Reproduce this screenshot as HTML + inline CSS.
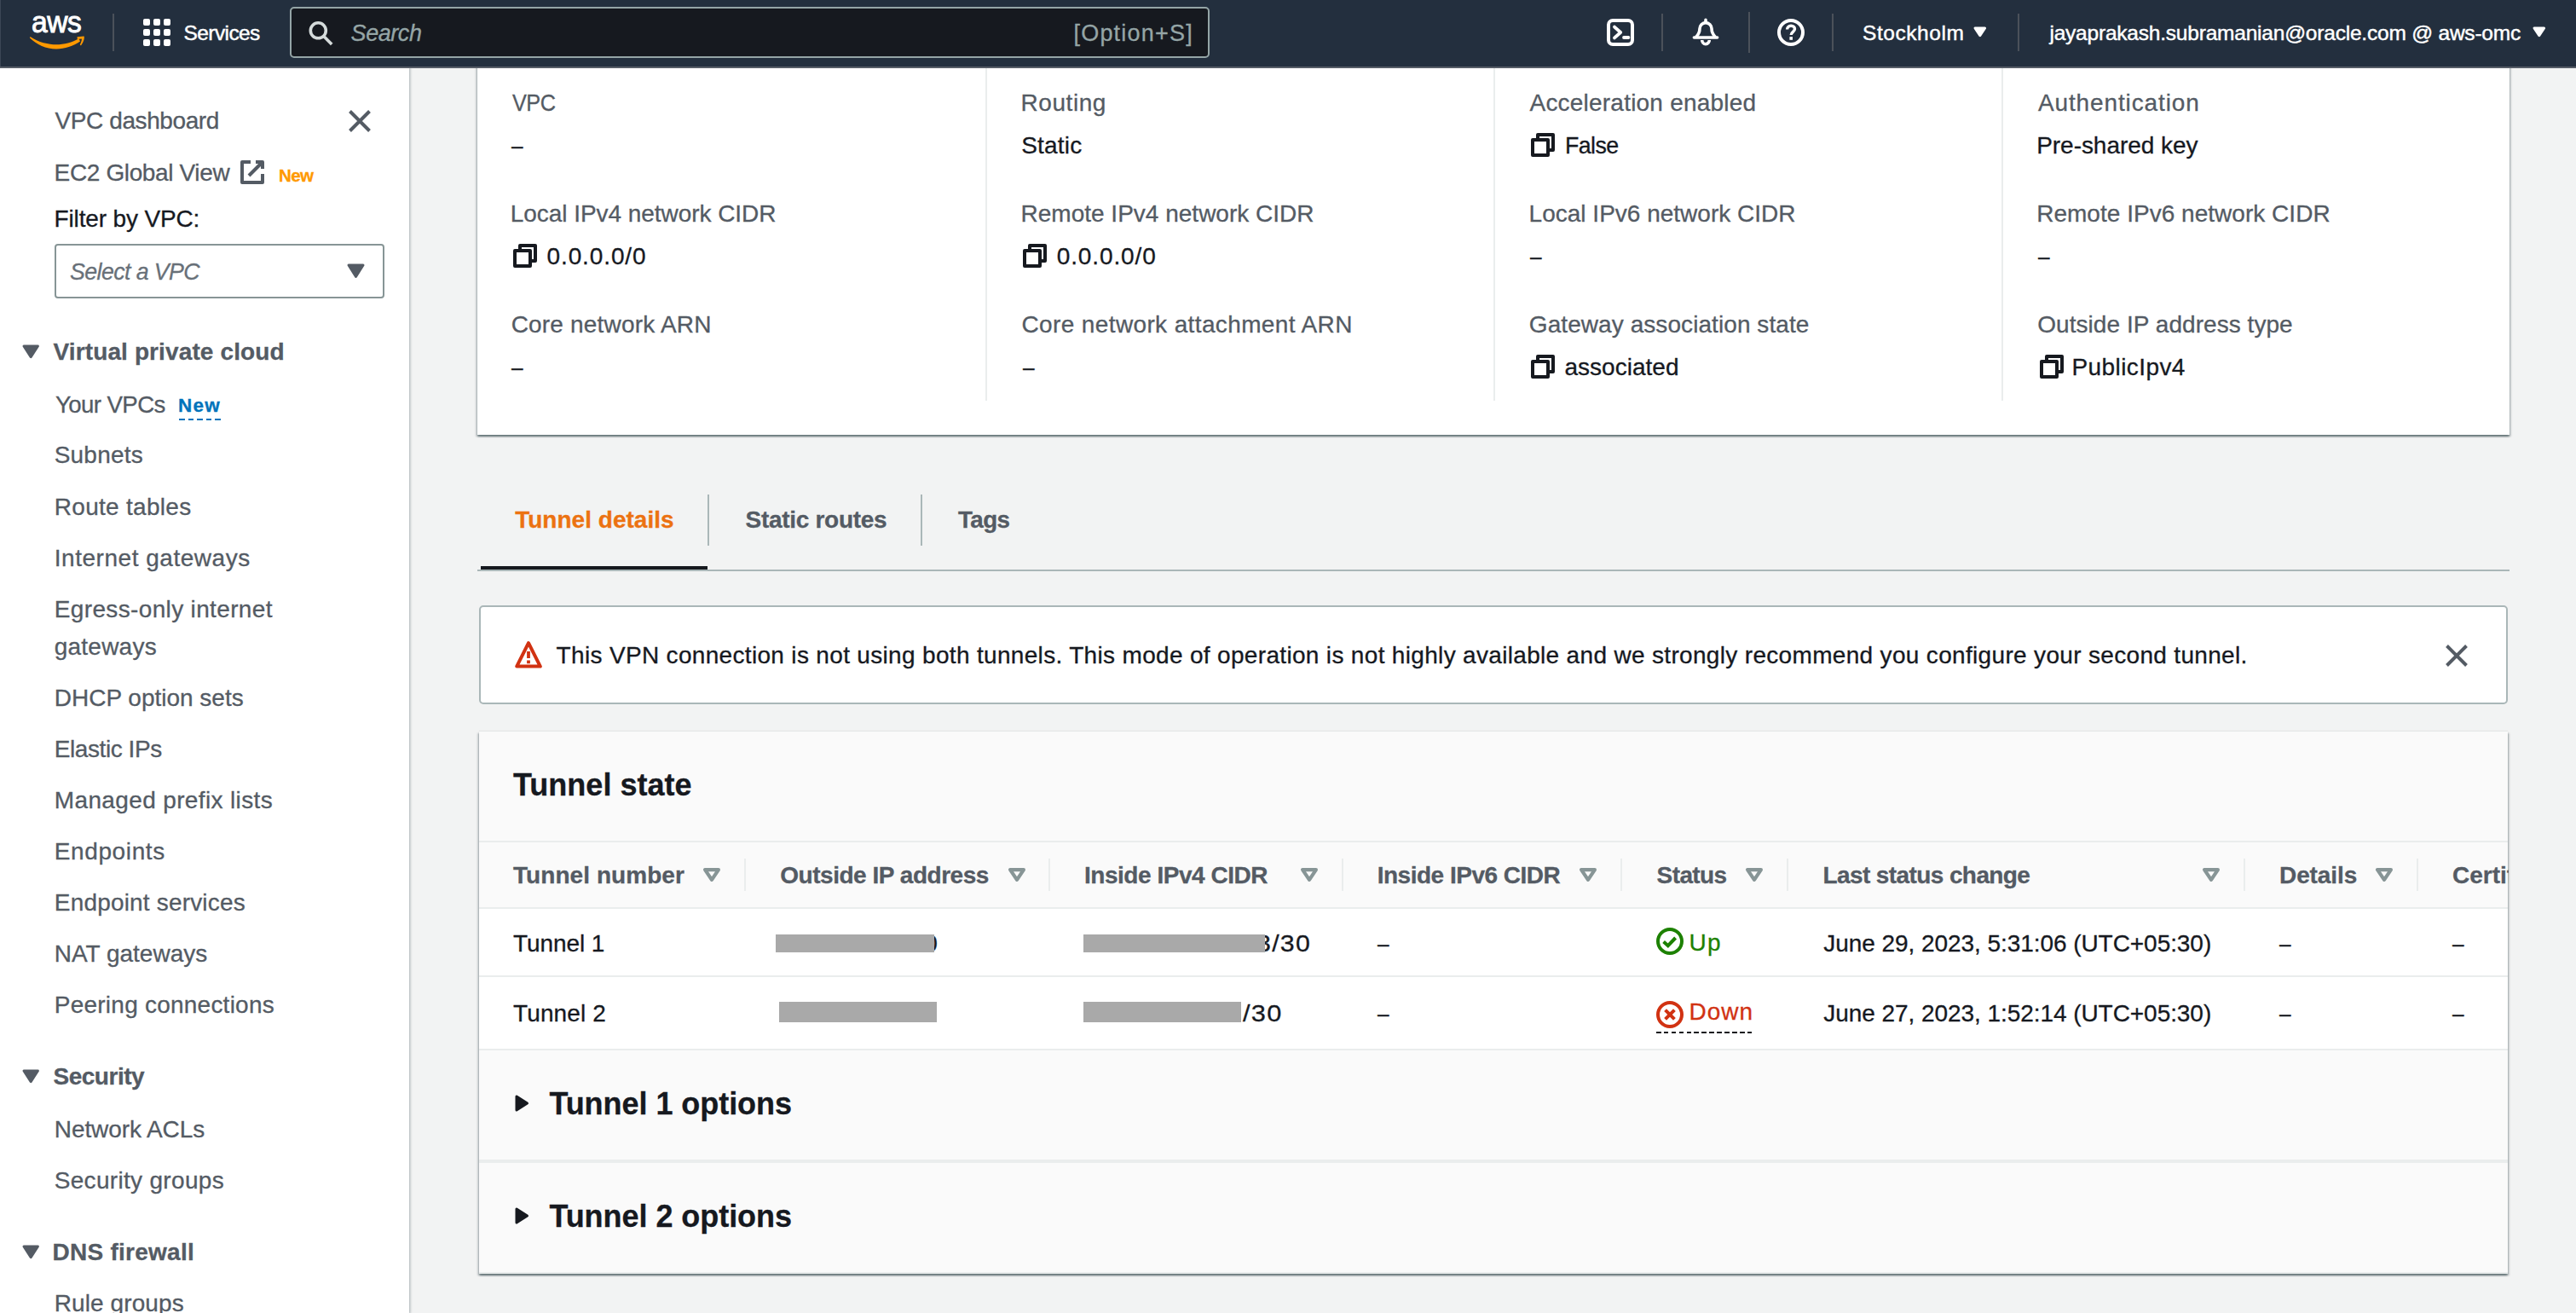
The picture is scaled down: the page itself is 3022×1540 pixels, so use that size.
<!DOCTYPE html>
<html lang="en"><head><meta charset="utf-8"><title>VPC Management Console</title>
<style>
*{box-sizing:border-box}
html,body{margin:0;padding:0}
html{width:3022px;height:1540px;overflow:hidden}
body{width:3022px;height:1540px;overflow:hidden;position:relative;background:#f2f3f3;font-family:"Liberation Sans",sans-serif;color:#16191f}
.a,.i,.t{position:absolute}
.i{display:block;overflow:visible}
.t{white-space:nowrap;line-height:1;transform-origin:0 0;-webkit-text-stroke:.3px currentColor}
.b{-webkit-text-stroke:.3px currentColor}
#pg{position:absolute;left:0;top:0;width:3022px;height:1540px;overflow:hidden}
.clip{width:65.5px;overflow:hidden;height:40px}
.hl{position:absolute;height:2px;background:#eaeded}
.vl{position:absolute;width:2px;background:#eaeded}
.nvl{position:absolute;width:2px;top:16px;height:44px;background:#4b515a}
.bar{position:absolute;background:#a9a9a9;z-index:3}
</style></head>
<body>
<div id="pg">
<div class="a" style="left:0;top:80px;width:480px;height:1460px;background:#fff;box-shadow:0 0 3px 1px rgba(0,28,36,.32)"></div>
<div class="a" style="left:560px;top:60px;width:2384px;height:450px;background:#fff;box-shadow:0 2px 2px 0 rgba(0,28,36,.45),2px 2px 2px 0 rgba(0,28,36,.15),-2px 2px 2px 0 rgba(0,28,36,.15)"></div>
<div class="vl" style="left:1156px;top:80px;height:390px"></div>
<div class="vl" style="left:1752px;top:80px;height:390px"></div>
<div class="vl" style="left:2348px;top:80px;height:390px"></div>
<svg class="i" style="left:1794.3px;top:154px" width="32" height="32" viewBox="0 0 32 32" ><g fill="none" stroke="#16191f" stroke-width="4" stroke-linejoin="round"><path d="M10 10V4h18v18h-6"/><path d="M4 10h18v18H4z"/></g></svg>
<svg class="i" style="left:599.8px;top:284px" width="32" height="32" viewBox="0 0 32 32" ><g fill="none" stroke="#16191f" stroke-width="4" stroke-linejoin="round"><path d="M10 10V4h18v18h-6"/><path d="M4 10h18v18H4z"/></g></svg>
<svg class="i" style="left:1198px;top:284px" width="32" height="32" viewBox="0 0 32 32" ><g fill="none" stroke="#16191f" stroke-width="4" stroke-linejoin="round"><path d="M10 10V4h18v18h-6"/><path d="M4 10h18v18H4z"/></g></svg>
<svg class="i" style="left:1794.3px;top:414px" width="32" height="32" viewBox="0 0 32 32" ><g fill="none" stroke="#16191f" stroke-width="4" stroke-linejoin="round"><path d="M10 10V4h18v18h-6"/><path d="M4 10h18v18H4z"/></g></svg>
<svg class="i" style="left:2390.5px;top:414px" width="32" height="32" viewBox="0 0 32 32" ><g fill="none" stroke="#16191f" stroke-width="4" stroke-linejoin="round"><path d="M10 10V4h18v18h-6"/><path d="M4 10h18v18H4z"/></g></svg>
<div class="a" style="left:560px;top:668px;width:2384px;height:2px;background:#aab7b8"></div>
<div class="a" style="left:564px;top:664px;width:266px;height:4.4px;background:#16191f"></div>
<div class="a" style="left:830px;top:580px;width:2px;height:60px;background:#aab7b8"></div>
<div class="a" style="left:1080px;top:580px;width:2px;height:60px;background:#aab7b8"></div>
<div class="a" style="left:562px;top:710px;width:2380px;height:116px;background:#fff;border:2px solid #aab7b8;border-radius:5px"></div>
<svg class="i" style="left:604px;top:751px" width="32" height="33" viewBox="0 0 32 33" ><path d="M16 3.2L29.8 30.6H2.2z" fill="none" stroke="#d13212" stroke-width="4" stroke-linejoin="round"/><path d="M16 13v8M16 23.4v3.8" stroke="#d13212" stroke-width="3.8" fill="none"/></svg>
<svg class="i" style="left:2868.5px;top:755.5px" width="26" height="26" viewBox="0 0 26 26" ><path d="M1.5 1.5L24.5 24.5M24.5 1.5L1.5 24.5" stroke="#545b64" stroke-width="4" fill="none"/></svg>
<div class="a" style="left:562px;top:858px;width:2380px;height:636px;background:#fafafa;box-shadow:0 2px 2px 0 rgba(0,28,36,.45),2px 2px 2px 0 rgba(0,28,36,.15),-2px 2px 2px 0 rgba(0,28,36,.15),0 -1px 1px 0 rgba(0,28,36,.06)"></div>
<div class="a" style="left:562px;top:1066px;width:2380px;height:164px;background:#fff"></div>
<div class="hl" style="left:562px;top:986px;width:2380px"></div>
<div class="hl" style="left:562px;top:1064px;width:2380px"></div>
<div class="hl" style="left:562px;top:1144px;width:2380px"></div>
<div class="hl" style="left:562px;top:1230px;width:2380px"></div>
<div class="hl" style="left:562px;top:1360px;width:2380px;height:4px"></div>
<div class="hl" style="left:562px;top:1492px;width:2380px;height:2px"></div>
<div class="vl" style="left:873px;top:1007px;height:38px"></div>
<div class="vl" style="left:1230px;top:1007px;height:38px"></div>
<div class="vl" style="left:1574px;top:1007px;height:38px"></div>
<div class="vl" style="left:1901px;top:1007px;height:38px"></div>
<div class="vl" style="left:2096px;top:1007px;height:38px"></div>
<div class="vl" style="left:2632px;top:1007px;height:38px"></div>
<div class="vl" style="left:2835px;top:1007px;height:38px"></div>
<svg class="i" style="left:825.3px;top:1018px" width="20" height="16" viewBox="0 0 20 16" ><path d="M2.1 2.1h15.8L10 13.9z" fill="none" stroke="#879596" stroke-width="4.2" stroke-linejoin="round"/></svg>
<svg class="i" style="left:1182.5px;top:1018px" width="20" height="16" viewBox="0 0 20 16" ><path d="M2.1 2.1h15.8L10 13.9z" fill="none" stroke="#879596" stroke-width="4.2" stroke-linejoin="round"/></svg>
<svg class="i" style="left:1526px;top:1018px" width="20" height="16" viewBox="0 0 20 16" ><path d="M2.1 2.1h15.8L10 13.9z" fill="none" stroke="#879596" stroke-width="4.2" stroke-linejoin="round"/></svg>
<svg class="i" style="left:1852.7px;top:1018px" width="20" height="16" viewBox="0 0 20 16" ><path d="M2.1 2.1h15.8L10 13.9z" fill="none" stroke="#879596" stroke-width="4.2" stroke-linejoin="round"/></svg>
<svg class="i" style="left:2047.7px;top:1018px" width="20" height="16" viewBox="0 0 20 16" ><path d="M2.1 2.1h15.8L10 13.9z" fill="none" stroke="#879596" stroke-width="4.2" stroke-linejoin="round"/></svg>
<svg class="i" style="left:2584px;top:1018px" width="20" height="16" viewBox="0 0 20 16" ><path d="M2.1 2.1h15.8L10 13.9z" fill="none" stroke="#879596" stroke-width="4.2" stroke-linejoin="round"/></svg>
<svg class="i" style="left:2787px;top:1018px" width="20" height="16" viewBox="0 0 20 16" ><path d="M2.1 2.1h15.8L10 13.9z" fill="none" stroke="#879596" stroke-width="4.2" stroke-linejoin="round"/></svg>
<div class="bar" style="left:910px;top:1096px;width:186px;height:21px"></div>
<div class="bar" style="left:1270.5px;top:1096px;width:213px;height:21px"></div>
<div class="bar" style="left:913.5px;top:1175px;width:185.5px;height:24px"></div>
<div class="bar" style="left:1270.5px;top:1175px;width:185.5px;height:24px"></div>
<svg class="i" style="left:1943px;top:1088px" width="32" height="32" viewBox="0 0 32 32" ><circle cx="16" cy="16" r="14" fill="none" stroke="#1d8102" stroke-width="4"/><path d="M8.6 16.6l5.2 4.6L22.6 12" fill="none" stroke="#1d8102" stroke-width="4"/></svg>
<svg class="i" style="left:1943px;top:1174px" width="32" height="32" viewBox="0 0 32 32" ><circle cx="16" cy="16" r="14" fill="none" stroke="#d13212" stroke-width="4"/><path d="M10.6 10.6l10.8 10.8M21.4 10.6L10.6 21.4" fill="none" stroke="#d13212" stroke-width="4"/></svg>
<div class="a" style="left:1943px;top:1210px;width:113px;height:2px;background:repeating-linear-gradient(90deg,#16191f 0,#16191f 5.6px,transparent 5.6px,transparent 8.9px)"></div>
<svg class="i" style="left:604px;top:1284px" width="17" height="20" viewBox="0 0 17 20" ><path d="M2 2v16l12.5-8z" fill="#16191f" stroke="#16191f" stroke-width="3" stroke-linejoin="round"/></svg>
<svg class="i" style="left:604px;top:1416px" width="17" height="20" viewBox="0 0 17 20" ><path d="M2 2v16l12.5-8z" fill="#16191f" stroke="#16191f" stroke-width="3" stroke-linejoin="round"/></svg>
<svg class="i" style="left:409px;top:129px" width="26" height="26" viewBox="0 0 26 26" ><path d="M1.5 1.5L24.5 24.5M24.5 1.5L1.5 24.5" stroke="#545b64" stroke-width="4" fill="none"/></svg>
<svg class="i" style="left:280px;top:186px" width="32" height="32" viewBox="0 0 32 32" ><g fill="none" stroke="#545b64" stroke-width="4"><path d="M28 18.1V28H4V4h10" stroke-linejoin="round"/><path d="M20 4h8v8" stroke-linejoin="round"/><path d="M12 20L28 4"/></g></svg>
<div class="a" style="left:64px;top:286px;width:387px;height:64px;background:#fff;border:2px solid #879596;border-radius:4px"></div>
<svg class="i" style="left:406.5px;top:309px" width="21" height="17.5" viewBox="0 0 21 17.5" ><path d="M2 2h17L10.5 15.5z" fill="#545b64" stroke="#545b64" stroke-width="3" stroke-linejoin="round"/></svg>
<svg class="i" style="left:26px;top:404px" width="20.4" height="16.6" viewBox="0 0 20.4 16.6" ><path d="M2 2h16.4L10.2 14.600000000000001z" fill="#545b64" stroke="#545b64" stroke-width="3" stroke-linejoin="round"/></svg>
<svg class="i" style="left:26px;top:1254px" width="20.4" height="16.6" viewBox="0 0 20.4 16.6" ><path d="M2 2h16.4L10.2 14.600000000000001z" fill="#545b64" stroke="#545b64" stroke-width="3" stroke-linejoin="round"/></svg>
<svg class="i" style="left:26px;top:1460px" width="20.4" height="16.6" viewBox="0 0 20.4 16.6" ><path d="M2 2h16.4L10.2 14.600000000000001z" fill="#545b64" stroke="#545b64" stroke-width="3" stroke-linejoin="round"/></svg>
<div class="a" style="left:210px;top:491px;width:49px;height:2px;background:repeating-linear-gradient(90deg,#0073bb 0,#0073bb 6.6px,transparent 6.6px,transparent 10.6px)"></div>
<div class="a" style="left:0;top:0;width:3022px;height:80px;background:#232f3e;border-bottom:2px solid #555c66"></div>
<div class="a" style="left:0;top:0;width:1px;height:78px;background:#3b4655"></div>
<span class="t" style="left:36.8px;top:9.1px;font-size:34.5px;color:#fff;transform:scaleX(.975);transform-origin:0 0;letter-spacing:-.5px;-webkit-text-stroke:.9px #fff">aws</span>
<svg class="i" style="left:30px;top:38px" width="74" height="24" viewBox="0 0 74 24" ><g fill="#ff9900"><path d="M5.4 4.9C15 11.6 27 14.2 36 14.2c9 0 19-2.600 26.500-7l1.500 3.200C56 15.800 46 19.400 36 19.400 24 19.400 13 14.200 5 6.400z"/><path d="M60.5 5.2l8.1-.6c.9 2.4-1.1 7.9-3.6 10.8l-1.2-.8c1.2-2.6 2.5-5.8 2-7l-5 .4z"/></g></svg>
<div class="nvl" style="left:132px"></div>
<svg class="i" style="left:168px;top:22px" width="32" height="32" viewBox="0 0 32 32" ><g fill="#fff"><rect x="0" y="0" width="8" height="8" rx="2"/><rect x="12" y="0" width="8" height="8" rx="2"/><rect x="24" y="0" width="8" height="8" rx="2"/><rect x="0" y="12" width="8" height="8" rx="2"/><rect x="12" y="12" width="8" height="8" rx="2"/><rect x="24" y="12" width="8" height="8" rx="2"/><rect x="0" y="24" width="8" height="8" rx="2"/><rect x="12" y="24" width="8" height="8" rx="2"/><rect x="24" y="24" width="8" height="8" rx="2"/></g></svg>
<div class="a" style="left:339.5px;top:8px;width:1079px;height:60px;background:#16191f;border:2px solid #95a5a6;border-radius:5px"></div>
<svg class="i" style="left:361px;top:24px" width="32" height="32" viewBox="0 0 32 32" ><g fill="none" stroke="#d5dbdb" stroke-width="3.6"><circle cx="12.3" cy="11.8" r="9"/><path d="M18.8 18.4l9.4 9.6"/></g></svg>
<svg class="i" style="left:1885px;top:22px" width="32" height="32" viewBox="0 0 32 32" ><g fill="none" stroke="#fff"><rect x="2" y="2" width="28" height="28" rx="5" stroke-width="4"/><path d="M9 9.6l7.200 6.400-7.200 6.400" stroke-width="3.800" stroke-linecap="round" stroke-linejoin="round"/><path d="M20 22h5.400" stroke-width="3.800" stroke-linecap="round"/></g></svg>
<svg class="i" style="left:1985px;top:22px" width="32" height="32" viewBox="0 0 32 32" ><g fill="none" stroke="#fff" stroke-width="3.6" stroke-linejoin="round"><path d="M16 1.400v2.600" stroke-linecap="round"/><path d="M2.400 22h27.200" stroke-linecap="round"/><path d="M4.600 21.600C7.600 18.600 9 15.600 9 11.600a7 7 0 0 1 14 0c0 4 1.400 7 4.400 10"/><path d="M11.700 25a4.300 4.700 0 0 0 8.600 0"/></g></svg>
<svg class="i" style="left:2085px;top:22px" width="32" height="32" viewBox="0 0 32 32" ><circle cx="16" cy="16" r="14" fill="none" stroke="#fff" stroke-width="4"/><path d="M11.6 12.6c0-2.600 1.900-4.400 4.500-4.400 2.600 0 4.400 1.600 4.400 3.900 0 3.200-4.300 3.400-4.300 6.900" fill="none" stroke="#fff" stroke-width="3.4"/><rect x="14.4" y="21.200" width="3.600" height="3.600" fill="#fff"/></svg>
<div class="nvl" style="left:1949px"></div>
<div class="nvl" style="left:2149px"></div>
<div class="nvl" style="left:2367px"></div>
<div class="nvl" style="left:2051px;top:14px;height:48px"></div>
<svg class="i" style="left:2315.2px;top:31.4px" width="15.6" height="12.6" viewBox="0 0 15.6 12.6" ><path d="M2 2h11.6L7.8 10.6z" fill="#fff" stroke="#fff" stroke-width="3" stroke-linejoin="round"/></svg>
<svg class="i" style="left:2970.6px;top:31.4px" width="15.6" height="12.6" viewBox="0 0 15.6 12.6" ><path d="M2 2h11.6L7.8 10.6z" fill="#fff" stroke="#fff" stroke-width="3" stroke-linejoin="round"/></svg>
<span class="t" style="left:215.6px;top:26.8px;font-size:24.5px;color:#fff;letter-spacing:-0.600px;-webkit-text-stroke:.45px #fff;">Services</span>
<span class="t" style="left:411.6px;top:25.9px;font-size:27px;font-style:italic;color:#95a5a6;letter-spacing:-0.446px;">Search</span>
<span class="t" style="left:1259.5px;top:26.4px;font-size:27px;color:#95a5a6;letter-spacing:1.200px;">[Option+S]</span>
<span class="t" style="left:2185.0px;top:26.8px;font-size:24.5px;color:#fff;letter-spacing:0.566px;-webkit-text-stroke:.45px #fff;">Stockholm</span>
<span class="t" style="left:2404.4px;top:26.8px;font-size:24.5px;color:#fff;letter-spacing:-0.207px;-webkit-text-stroke:.45px #fff;">jayaprakash.subramanian@oracle.com @ aws-omc</span>
<span class="t" style="left:64.6px;top:128.3px;font-size:28px;color:#545b64;letter-spacing:-0.417px;">VPC dashboard</span>
<span class="t" style="left:63.6px;top:188.5px;font-size:28px;color:#545b64;letter-spacing:-0.366px;">EC2 Global View</span>
<span class="t b" style="left:327.0px;top:194.7px;font-size:21px;font-weight:700;color:#ff9900;letter-spacing:-0.600px;transform:scaleX(0.9797);">New</span>
<span class="t" style="left:63.6px;top:242.5px;font-size:28px;letter-spacing:-0.148px;">Filter by VPC:</span>
<span class="t" style="left:82.3px;top:304.5px;font-size:28px;font-style:italic;color:#687078;letter-spacing:-0.600px;transform:scaleX(0.9539);">Select a VPC</span>
<span class="t b" style="left:62.5px;top:398.5px;font-size:28px;font-weight:700;color:#545b64;letter-spacing:0.122px;">Virtual private cloud</span>
<span class="t" style="left:64.6px;top:460.5px;font-size:28px;color:#545b64;letter-spacing:-0.600px;transform:scaleX(0.9860);">Your VPCs</span>
<span class="t b" style="left:209.4px;top:465.2px;font-size:22px;font-weight:700;color:#0073bb;letter-spacing:1.200px;transform:scaleX(1.0206);">New</span>
<span class="t" style="left:63.7px;top:520.1px;font-size:28px;color:#545b64;letter-spacing:0.209px;">Subnets</span>
<span class="t" style="left:63.8px;top:580.5px;font-size:28px;color:#545b64;letter-spacing:0.290px;">Route tables</span>
<span class="t" style="left:63.8px;top:640.5px;font-size:28px;color:#545b64;letter-spacing:0.524px;">Internet gateways</span>
<span class="t" style="left:63.8px;top:700.5px;font-size:28px;color:#545b64;letter-spacing:0.351px;">Egress-only internet</span>
<span class="t" style="left:63.7px;top:744.5px;font-size:28px;color:#545b64;letter-spacing:0.244px;">gateways</span>
<span class="t" style="left:63.8px;top:804.5px;font-size:28px;color:#545b64;letter-spacing:-0.009px;">DHCP option sets</span>
<span class="t" style="left:63.8px;top:864.5px;font-size:28px;color:#545b64;letter-spacing:-0.430px;">Elastic IPs</span>
<span class="t" style="left:63.8px;top:924.5px;font-size:28px;color:#545b64;letter-spacing:0.363px;">Managed prefix lists</span>
<span class="t" style="left:63.8px;top:984.5px;font-size:28px;color:#545b64;letter-spacing:0.608px;">Endpoints</span>
<span class="t" style="left:63.8px;top:1044.5px;font-size:28px;color:#545b64;letter-spacing:0.181px;">Endpoint services</span>
<span class="t" style="left:63.8px;top:1104.5px;font-size:28px;color:#545b64;letter-spacing:-0.008px;">NAT gateways</span>
<span class="t" style="left:63.8px;top:1164.5px;font-size:28px;color:#545b64;letter-spacing:0.232px;">Peering connections</span>
<span class="t" style="left:63.8px;top:1310.5px;font-size:28px;color:#545b64;letter-spacing:-0.094px;">Network ACLs</span>
<span class="t" style="left:63.7px;top:1370.5px;font-size:28px;color:#545b64;letter-spacing:0.319px;">Security groups</span>
<span class="t" style="left:63.8px;top:1514.5px;font-size:28px;color:#545b64;letter-spacing:0.092px;">Rule groups</span>
<span class="t b" style="left:62.5px;top:1248.5px;font-size:28px;font-weight:700;color:#545b64;letter-spacing:-0.489px;">Security</span>
<span class="t b" style="left:61.5px;top:1454.5px;font-size:28px;font-weight:700;color:#545b64;letter-spacing:0.264px;">DNS firewall</span>
<span class="t" style="left:600.7px;top:106.5px;font-size:28px;color:#545b64;letter-spacing:-0.600px;transform:scaleX(0.9029);">VPC</span>
<span class="t" style="left:1197.5px;top:106.5px;font-size:28px;color:#545b64;letter-spacing:0.560px;">Routing</span>
<span class="t" style="left:1794.5px;top:106.5px;font-size:28px;color:#545b64;letter-spacing:0.214px;">Acceleration enabled</span>
<span class="t" style="left:2390.9px;top:106.5px;font-size:28px;color:#545b64;letter-spacing:0.878px;">Authentication</span>
<span class="t" style="left:600.2px;top:156.5px;font-size:28px;transform:scaleX(0.8688);">–</span>
<span class="t" style="left:1198.2px;top:156.8px;font-size:28px;letter-spacing:0.215px;">Static</span>
<span class="t" style="left:1835.7px;top:156.5px;font-size:28px;letter-spacing:-0.600px;transform:scaleX(0.9560);">False</span>
<span class="t" style="left:2389.2px;top:156.5px;font-size:28px;letter-spacing:-0.043px;">Pre-shared key</span>
<span class="t" style="left:598.7px;top:236.5px;font-size:28px;color:#545b64;letter-spacing:-0.044px;">Local IPv4 network CIDR</span>
<span class="t" style="left:1197.5px;top:236.5px;font-size:28px;color:#545b64;letter-spacing:0.006px;">Remote IPv4 network CIDR</span>
<span class="t" style="left:1793.6px;top:236.5px;font-size:28px;color:#545b64;letter-spacing:0.006px;">Local IPv6 network CIDR</span>
<span class="t" style="left:2389.2px;top:236.5px;font-size:28px;color:#545b64;letter-spacing:0.023px;">Remote IPv6 network CIDR</span>
<span class="t" style="left:641.5px;top:286.5px;font-size:28px;letter-spacing:0.887px;">0.0.0.0/0</span>
<span class="t" style="left:1239.7px;top:286.5px;font-size:28px;letter-spacing:0.887px;">0.0.0.0/0</span>
<span class="t" style="left:1794.8px;top:286.5px;font-size:28px;transform:scaleX(0.8688);">–</span>
<span class="t" style="left:2391.2px;top:286.5px;font-size:28px;transform:scaleX(0.8688);">–</span>
<span class="t" style="left:599.7px;top:366.5px;font-size:28px;color:#545b64;letter-spacing:0.188px;">Core network ARN</span>
<span class="t" style="left:1198.5px;top:366.5px;font-size:28px;color:#545b64;letter-spacing:0.374px;">Core network attachment ARN</span>
<span class="t" style="left:1793.8px;top:366.5px;font-size:28px;color:#545b64;letter-spacing:0.072px;">Gateway association state</span>
<span class="t" style="left:2390.2px;top:366.5px;font-size:28px;color:#545b64;letter-spacing:0.052px;">Outside IP address type</span>
<span class="t" style="left:600.2px;top:416.5px;font-size:28px;transform:scaleX(0.8688);">–</span>
<span class="t" style="left:1199.5px;top:416.5px;font-size:28px;transform:scaleX(0.8688);">–</span>
<span class="t" style="left:1835.5px;top:416.5px;font-size:28px;letter-spacing:0.012px;">associated</span>
<span class="t" style="left:2430.5px;top:416.5px;font-size:28px;letter-spacing:0.410px;">PublicIpv4</span>
<span class="t b" style="left:604.2px;top:596.3px;font-size:28px;font-weight:700;color:#ec7211;letter-spacing:0.016px;">Tunnel details</span>
<span class="t b" style="left:874.6px;top:596.3px;font-size:28px;font-weight:700;color:#545b64;letter-spacing:-0.302px;">Static routes</span>
<span class="t b" style="left:1124.0px;top:596.3px;font-size:28px;font-weight:700;color:#545b64;letter-spacing:-0.600px;transform:scaleX(0.9918);">Tags</span>
<span class="t" style="left:652.6px;top:754.8px;font-size:28px;letter-spacing:0.326px;">This VPN connection is not using both tunnels. This mode of operation is not highly available and we strongly recommend you configure your second tunnel.</span>
<span class="t b" style="left:602.0px;top:902.5px;font-size:36px;font-weight:700;letter-spacing:0.015px;">Tunnel state</span>
<span class="t b" style="left:602.0px;top:1012.5px;font-size:28px;font-weight:700;color:#545b64;letter-spacing:0.063px;">Tunnel number</span>
<span class="t b" style="left:915.3px;top:1012.5px;font-size:28px;font-weight:700;color:#545b64;letter-spacing:-0.475px;">Outside IP address</span>
<span class="t b" style="left:1272.0px;top:1012.5px;font-size:28px;font-weight:700;color:#545b64;letter-spacing:-0.473px;">Inside IPv4 CIDR</span>
<span class="t b" style="left:1615.7px;top:1012.5px;font-size:28px;font-weight:700;color:#545b64;letter-spacing:-0.493px;">Inside IPv6 CIDR</span>
<span class="t b" style="left:1943.6px;top:1012.5px;font-size:28px;font-weight:700;color:#545b64;letter-spacing:-0.600px;">Status</span>
<span class="t b" style="left:2138.5px;top:1012.5px;font-size:28px;font-weight:700;color:#545b64;letter-spacing:-0.600px;">Last status change</span>
<span class="t b" style="left:2674.0px;top:1012.5px;font-size:28px;font-weight:700;color:#545b64;letter-spacing:-0.091px;">Details</span>
<span class="t b clip" style="left:2877.0px;top:1012.5px;font-size:28px;font-weight:700;color:#545b64;">Certificate ARN</span>
<span class="t" style="left:602.0px;top:1092.5px;font-size:28px;letter-spacing:-0.093px;">Tunnel 1</span>
<span class="t" style="left:602.0px;top:1174.5px;font-size:28px;letter-spacing:0.121px;">Tunnel 2</span>
<span class="t" style="left:1473.5px;top:1092.5px;font-size:28px;letter-spacing:1.200px;transform:scaleX(1.0810);">3/30</span>
<span class="t" style="left:1084.3px;top:1092.5px;font-size:28px;">0</span>
<span class="t" style="left:1458.0px;top:1174.5px;font-size:28px;letter-spacing:1.200px;transform:scaleX(1.0969);">/30</span>
<span class="t" style="left:1616.0px;top:1092.5px;font-size:28px;transform:scaleX(0.8688);">–</span>
<span class="t" style="left:1616.0px;top:1174.5px;font-size:28px;transform:scaleX(0.8688);">–</span>
<span class="t" style="left:2673.6px;top:1092.5px;font-size:28px;transform:scaleX(0.8688);">–</span>
<span class="t" style="left:2673.6px;top:1174.5px;font-size:28px;transform:scaleX(0.8688);">–</span>
<span class="t" style="left:2876.5px;top:1092.5px;font-size:28px;transform:scaleX(0.8688);">–</span>
<span class="t" style="left:2876.5px;top:1174.5px;font-size:28px;transform:scaleX(0.8688);">–</span>
<span class="t" style="left:1981.6px;top:1092.1px;font-size:28px;color:#1d8102;letter-spacing:1.079px;">Up</span>
<span class="t" style="left:1981.6px;top:1173.3px;font-size:28px;color:#d13212;letter-spacing:0.962px;">Down</span>
<span class="t" style="left:2139.3px;top:1092.5px;font-size:28px;letter-spacing:-0.059px;">June 29, 2023, 5:31:06 (UTC+05:30)</span>
<span class="t" style="left:2139.3px;top:1174.8px;font-size:28px;letter-spacing:-0.059px;">June 27, 2023, 1:52:14 (UTC+05:30)</span>
<span class="t b" style="left:644.4px;top:1276.5px;font-size:36px;font-weight:700;letter-spacing:-0.046px;">Tunnel 1 options</span>
<span class="t b" style="left:644.4px;top:1408.5px;font-size:36px;font-weight:700;letter-spacing:-0.046px;">Tunnel 2 options</span>
</div>
</body></html>
